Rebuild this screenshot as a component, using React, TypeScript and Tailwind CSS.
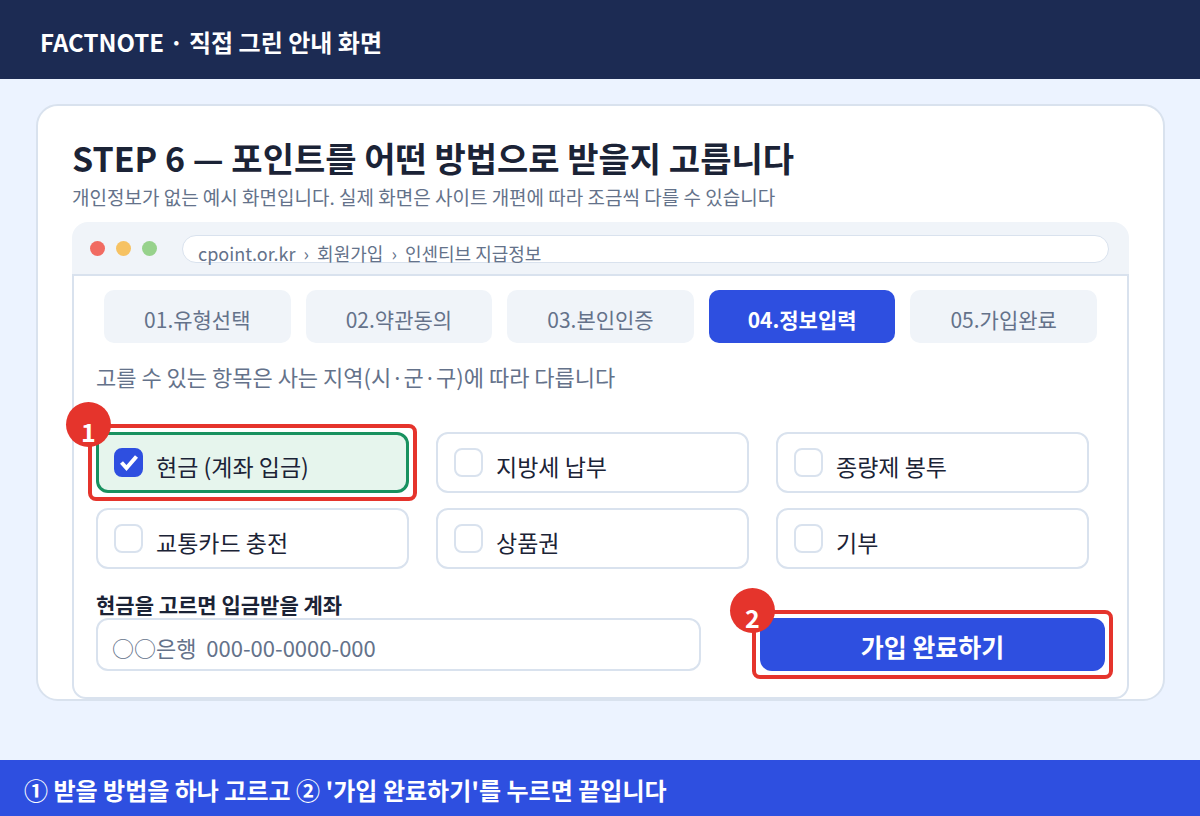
import { useState } from "react";

const STEPS = ["01.유형선택", "02.약관동의", "03.본인인증", "04.정보입력", "05.가입완료"];
const CURRENT_STEP = 3;

const OPTIONS = [
  { id: "cash", label: "현금 (계좌 입금)" },
  { id: "tax", label: "지방세 납부" },
  { id: "bag", label: "종량제 봉투" },
  { id: "transit", label: "교통카드 충전" },
  { id: "voucher", label: "상품권" },
  { id: "donate", label: "기부" },
];

// red frame + numbered badge around the element to click
function Callout({ n }: { n: number }) {
  return (
    <div className="pointer-events-none absolute -inset-2 rounded-lg border-4 border-[#e5342c]">
      <span className="absolute -left-[26px] -top-[26px] flex size-[45px] items-center justify-center rounded-full bg-[#e5342c] pt-3.5 text-[25px] leading-none font-bold text-white">
        {n}
      </span>
    </div>
  );
}

interface OptionProps {
  id: string;
  label: string;
  checked: boolean;
  onSelect: () => void;
}

function Option({ id, label, checked, onSelect }: OptionProps) {
  return (
    <div className="relative">
      <label
        htmlFor={id}
        className={
          checked
            ? "flex h-[61px] items-center rounded-xl border-3 border-[#18915f] bg-[#e6f5ed] px-[15px]"
            : "flex h-[61px] items-center rounded-xl border-2 border-[#d9e2ee] bg-white px-4"
        }
      >
        <span className="grid shrink-0">
          <input
            id={id}
            type="checkbox"
            checked={checked}
            onChange={onSelect}
            className="col-start-1 row-start-1 size-[29px] appearance-none rounded-lg border-2 border-[#d9e2ee] bg-white checked:border-[#2e4fe0] checked:bg-[#2e4fe0]"
          />
          {checked && (
            <svg viewBox="0 0 29 29" className="pointer-events-none col-start-1 row-start-1 size-[29px]" fill="none" stroke="#fff" strokeWidth="4">
              <path d="M7.5 14.5 L12.5 20 L22.5 8.5" />
            </svg>
          )}
        </span>
        <span className="ml-[13px] pt-1.5 text-[23px] leading-8 text-[#1b2336]">{label}</span>
      </label>
      {id === "cash" && <Callout n={1} />}
    </div>
  );
}

export default function App() {
  const [selected, setSelected] = useState("cash");

  return (
    <div className="flex min-h-screen flex-col bg-[#ecf3ff] font-['Noto_Sans_CJK_KR',sans-serif] text-[#1b2336]">
      <header className="flex h-[79px] items-center bg-[#1c2b53] px-10 pt-1">
        <p className="text-2xl leading-8 font-bold text-white">FACTNOTE · 직접 그린 안내 화면</p>
      </header>

      <main className="mt-[25px] mr-[35px] mb-[59px] ml-9 rounded-[22px] border-2 border-[#d9e2ee] bg-white px-[34px] pt-[30px]">
        <h1 className="text-[34px] leading-[44px] font-bold">STEP 6 — 포인트를 어떤 방법으로 받을지 고릅니다</h1>
        <p className="pt-0.5 pb-2.5 text-[19px] leading-[30px] text-[#64728a]">
          개인정보가 없는 예시 화면입니다. 실제 화면은 사이트 개편에 따라 조금씩 다를 수 있습니다
        </p>

        <section>
          <div className="flex h-[52px] items-center rounded-t-2xl bg-[#f0f4f9] pr-5 pl-[18px]">
            <div className="flex gap-[11px]">
              <span className="size-[15px] rounded-full bg-[#f16b62]" />
              <span className="size-[15px] rounded-full bg-[#f6c263]" />
              <span className="size-[15px] rounded-full bg-[#97d28c]" />
            </div>
            <div className="mt-0.5 ml-[25px] flex h-7 flex-1 items-start rounded-full border border-[#d9e2ee] bg-white px-[15px]">
              <input
                type="text"
                readOnly
                aria-label="주소"
                value="cpoint.or.kr  ›  회원가입  ›  인센티브 지급정보"
                className="h-[34px] w-full shrink-0 bg-transparent text-lg text-[#64728a] outline-none"
              />
            </div>
          </div>

          <div className="rounded-b-[14px] border-2 border-[#d9e2ee] px-[22px] pt-3.5 pb-[26px]">
            <ol className="mx-2 grid grid-cols-5 gap-[15px]">
              {STEPS.map((step, i) => (
                <li
                  key={step}
                  className={
                    i === CURRENT_STEP
                      ? "flex h-[53px] items-center justify-center rounded-[10px] bg-[#2e4fe0] pt-1.5 text-[21px] font-bold text-white"
                      : "flex h-[53px] items-center justify-center rounded-[10px] bg-[#f0f4f9] pt-1.5 text-[21px] text-[#64728a]"
                  }
                >
                  {step}
                </li>
              ))}
            </ol>

            <p className="mt-[17px] text-[22px] leading-8 text-[#64728a]">
              고를 수 있는 항목은 사는 지역(시·군·구)에 따라 다릅니다
            </p>

            <div className="mt-10 mr-4 grid grid-cols-3 gap-x-[27px] gap-y-[15px]">
              {OPTIONS.map((o) => (
                <Option
                  key={o.id}
                  id={o.id}
                  label={o.label}
                  checked={selected === o.id}
                  onSelect={() => setSelected(o.id)}
                />
              ))}
            </div>

            <div className="mt-[22px] flex items-end gap-[59px]">
              <div className="flex-1">
                <label htmlFor="account" className="block text-[21px] leading-[27px] font-bold">
                  현금을 고르면 입금받을 계좌
                </label>
                <input
                  id="account"
                  type="text"
                  placeholder="○○은행  000-00-0000-000"
                  className="block h-[53px] w-full rounded-xl border-2 border-[#d9e2ee] bg-white px-3.5 pt-1 text-[22px] text-[#1b2336] outline-none placeholder:text-[#64728a]"
                />
              </div>
              <div className="relative w-[345px]">
                <button type="button" className="block h-[53px] w-full rounded-xl bg-[#2e4fe0] pt-1 text-[25px] font-bold text-white">
                  가입 완료하기
                </button>
                <Callout n={2} />
              </div>
            </div>
          </div>
        </section>
      </main>

      <footer className="mt-auto flex h-14 items-center bg-[#2e4fe0] px-6 pt-1">
        <p className="text-2xl leading-8 font-bold text-white">
          ① 받을 방법을 하나 고르고 ② '가입 완료하기'를 누르면 끝입니다
        </p>
      </footer>
    </div>
  );
}
